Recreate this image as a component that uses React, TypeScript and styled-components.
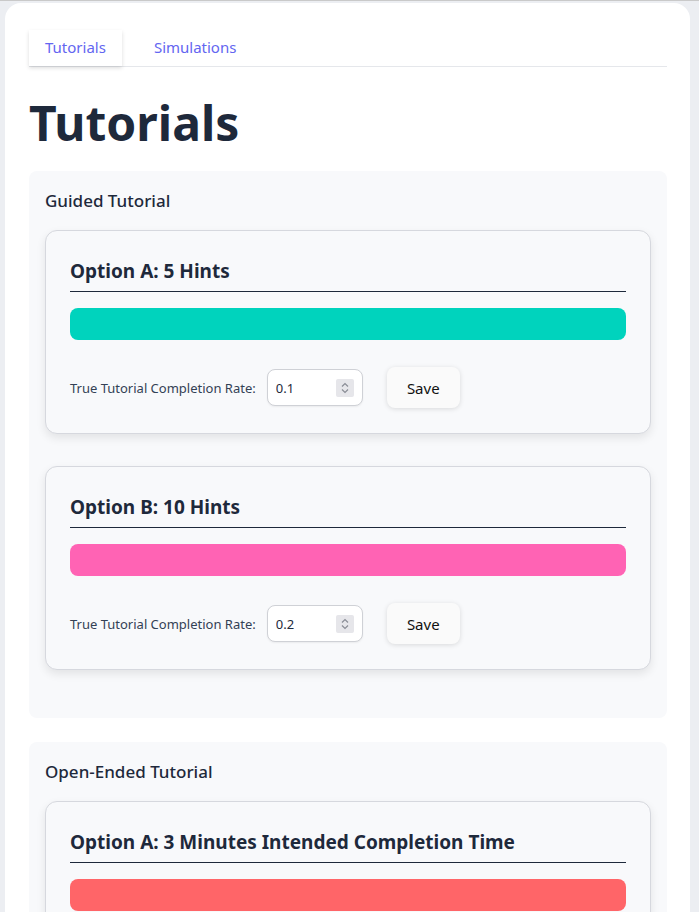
import React, { useState } from "react";
import styled, { createGlobalStyle } from "styled-components";

const GlobalStyle = createGlobalStyle`
  html, body {
    margin: 0;
    padding: 0;
    background: #eceef2;
  }
  body {
    border-top: 1px solid #c9c9c9;
    font-family: "Noto Sans", "Open Sans", Arial, sans-serif;
    color: #1e293b;
  }
  * {
    box-sizing: border-box;
  }
`;

const Page = styled.div`
  padding: 2px 9px 0 5px;
`;

const MainCard = styled.div`
  background: #ffffff;
  border-radius: 16px 16px 0 0;
  padding: 27px 23px 40px 24px;
  min-height: 1000px;
`;

const TabList = styled.div`
  display: flex;
  gap: 16px;
  border-bottom: 1px solid #e5e7eb;
`;

const Tab = styled.button<{ $active?: boolean }>`
  font-family: inherit;
  font-size: 15px;
  color: #6366f1;
  background: #fff;
  border: none;
  height: 36px;
  padding: 0 16px 2px;
  cursor: pointer;
  box-shadow: ${(p) => (p.$active ? "0 2px 4px rgba(0, 0, 0, 0.14)" : "none")};
`;

const PageTitle = styled.h1`
  font-size: 48px;
  font-weight: 700;
  line-height: 58px;
  margin: 27px 0 19px;
  color: #1e293b;
`;

const Section = styled.section`
  background: #f8f9fb;
  border-radius: 8px;
  padding: 18px 16px 16px;
  margin-bottom: 24px;
`;

const SectionTitle = styled.h3`
  font-size: 17px;
  font-weight: 500;
  line-height: 24px;
  margin: 0 0 17px;
`;

const OptionCard = styled.div`
  background: #f8f9fb;
  border: 1px solid #d6d8de;
  border-radius: 12px;
  padding: 26px 24px 25px;
  margin-bottom: 32px;
  box-shadow: 0 4px 10px rgba(0, 0, 0, 0.09);
`;

const OptionTitle = styled.h4`
  font-size: 19px;
  font-weight: 700;
  line-height: 28px;
  margin: 0;
  padding-bottom: 6px;
  border-bottom: 1px solid #1e293b;
`;

const Bar = styled.div<{ $color: string }>`
  height: 32px;
  border-radius: 8px;
  margin-top: 16px;
  background: ${(p) => p.$color};
`;

const RateRow = styled.div`
  display: flex;
  align-items: center;
  margin-top: 27px;
`;

const Label = styled.label`
  font-size: 13px;
  color: #334155;
  margin-right: 11px;
`;

const NumberBox = styled.div`
  display: flex;
  align-items: center;
  width: 96px;
  height: 37px;
  border: 1px solid #cfd1d6;
  border-radius: 8px;
  background: #fff;
  padding: 0 8px 0 8px;
  box-shadow: 0 1px 2px rgba(0, 0, 0, 0.06);
`;

const NumberInput = styled.input`
  flex: 1;
  min-width: 0;
  border: none;
  outline: none;
  background: transparent;
  font-family: inherit;
  font-size: 13px;
  color: #1e293b;
  padding: 0;
`;

const Spinner = styled.span`
  display: flex;
  align-items: center;
  justify-content: center;
  width: 18px;
  height: 18px;
  background: #e6e6ea;
  border-radius: 2px;
`;

const SaveButton = styled.button`
  margin-left: 24px;
  height: 41px;
  width: 73px;
  border: none;
  border-radius: 8px;
  background: #fafafa;
  font-family: inherit;
  font-size: 15px;
  color: #111;
  cursor: pointer;
  box-shadow: 0 1px 5px rgba(0, 0, 0, 0.13);
`;

type Option = { title: string; color: string; rate: string };

const sections: { name: string; options: Option[] }[] = [
  {
    name: "Guided Tutorial",
    options: [
      { title: "Option A: 5 Hints", color: "#00d3bd", rate: "0.1" },
      { title: "Option B: 10 Hints", color: "#ff63b4", rate: "0.2" },
    ],
  },
  {
    name: "Open-Ended Tutorial",
    options: [
      { title: "Option A: 3 Minutes Intended Completion Time", color: "#ff6568", rate: "0.1" },
      { title: "Option B: 6 Minutes Intended Completion Time", color: "#7c83fd", rate: "0.2" },
    ],
  },
];

function SpinIcon() {
  return (
    <svg width="10" height="14" viewBox="0 0 10 14" fill="none" stroke="#8a8d96" strokeWidth="1.2">
      <path d="M2 5.5 L5 2.5 L8 5.5" />
      <path d="M2 8.5 L5 11.5 L8 8.5" />
    </svg>
  );
}

function OptionBlock({ option }: { option: Option }) {
  const [rate, setRate] = useState(option.rate);
  return (
    <OptionCard>
      <OptionTitle>{option.title}</OptionTitle>
      <Bar $color={option.color} />
      <RateRow>
        <Label>True Tutorial Completion Rate:</Label>
        <NumberBox>
          <NumberInput value={rate} onChange={(e) => setRate(e.target.value)} />
          <Spinner>
            <SpinIcon />
          </Spinner>
        </NumberBox>
        <SaveButton>Save</SaveButton>
      </RateRow>
    </OptionCard>
  );
}

export default function App() {
  const [tab, setTab] = useState("tutorials");
  return (
    <>
      <GlobalStyle />
      <Page>
        <MainCard>
          <TabList>
            <Tab $active={tab === "tutorials"} onClick={() => setTab("tutorials")}>
              Tutorials
            </Tab>
            <Tab $active={tab === "simulations"} onClick={() => setTab("simulations")}>
              Simulations
            </Tab>
          </TabList>
          <PageTitle>Tutorials</PageTitle>
          {sections.map((s) => (
            <Section key={s.name}>
              <SectionTitle>{s.name}</SectionTitle>
              {s.options.map((o) => (
                <OptionBlock key={o.title} option={o} />
              ))}
            </Section>
          ))}
        </MainCard>
      </Page>
    </>
  );
}
